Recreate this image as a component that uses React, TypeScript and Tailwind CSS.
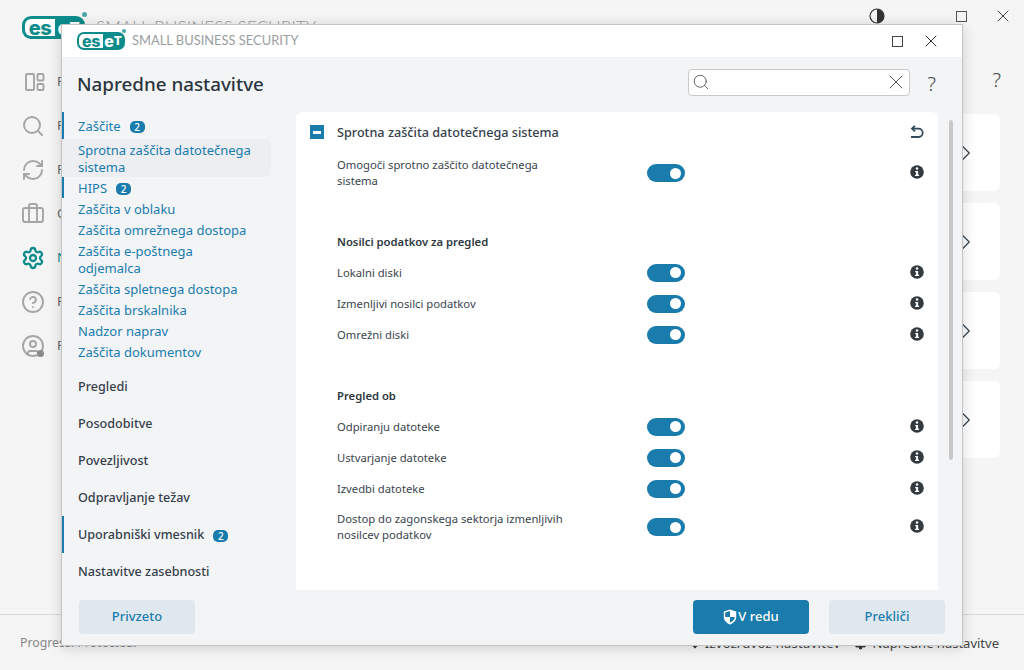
import { ArrowDown, ChevronRight, CircleHelp, CircleUser, RefreshCw, Search, Settings, Briefcase, X } from 'lucide-react';

const subItems = [
  { name: 'Sprotna zaščita datotečnega sistema', selected: true },
  { name: 'HIPS', badge: true, bar: true },
  { name: 'Zaščita v oblaku' },
  { name: 'Zaščita omrežnega dostopa' },
  { name: 'Zaščita e-poštnega odjemalca' },
  { name: 'Zaščita spletnega dostopa' },
  { name: 'Zaščita brskalnika' },
  { name: 'Nadzor naprav' },
  { name: 'Zaščita dokumentov' },
];

const topItems = [
  { name: 'Pregledi' },
  { name: 'Posodobitve' },
  { name: 'Povezljivost' },
  { name: 'Odpravljanje težav' },
  { name: 'Uporabniški vmesnik', badge: true, bar: true },
  { name: 'Nastavitve zasebnosti' },
];

const sideIcons = [
  { name: 'Pregled', icon: 'dash' },
  { name: 'Pregled računalnika', icon: Search },
  { name: 'Posodobitev', icon: RefreshCw },
  { name: 'Orodja', icon: Briefcase },
  { name: 'Nastavitve', icon: Settings, active: true },
  { name: 'Pomoč in podpora', icon: CircleHelp },
  { name: 'Pregled računa', icon: CircleUser, dot: true },
];

function Logo({ big }: { big?: boolean }) {
  return (
    <div className={big ? 'relative h-[23px] w-[63px] shrink-0' : 'relative h-[18px] w-[48px] shrink-0'}>
      <div
        className={
          big
            ? "flex h-full items-stretch overflow-hidden rounded-[9px] bg-[#0e8c8c] p-[3px] font-['Inter',sans-serif] font-extrabold"
            : "flex h-full items-stretch overflow-hidden rounded-[7px] bg-[#0e8c8c] p-[2px] font-['Inter',sans-serif] font-extrabold"
        }
      >
        <span
          className={
            big
              ? 'flex w-[30px] items-center justify-center rounded-l-[6px] bg-white text-[20px] leading-none tracking-[-0.5px] text-[#0e8c8c]'
              : 'flex w-[24px] items-center justify-center rounded-l-[5px] bg-white text-[16px] leading-none tracking-[-0.5px] text-[#0e8c8c]'
          }
        >
          es
        </span>
        <span
          className={
            big
              ? 'flex flex-1 items-center justify-center text-[20px] leading-none text-white'
              : 'flex flex-1 items-center justify-center text-[16px] leading-none text-white'
          }
        >
          e
          <span className={big ? 'text-[15px]' : 'text-[12px]'}>T</span>
        </span>
      </div>
      <div
        className={
          big
            ? 'absolute top-[-4px] right-[-2px] h-[5px] w-[5px] rounded-full bg-[#4aa9a9]'
            : 'absolute top-[-3px] right-[-1px] h-[4px] w-[4px] rounded-full bg-[#4aa9a9]'
        }
      />
    </div>
  );
}

function Badge() {
  return (
    <span className="ml-[9px] inline-flex h-[12px] w-[15px] items-center justify-center rounded-[5px] bg-[#1a7cad] text-[10px] leading-none font-medium text-white">
      2
    </span>
  );
}

function Toggle() {
  return (
    <div className="flex h-[18px] w-[38px] shrink-0 items-center justify-end rounded-full bg-[#1a7cad] pr-[4px]">
      <div className="h-[11px] w-[11px] rounded-full bg-white" />
    </div>
  );
}

function InfoIcon() {
  return (
    <svg width="14" height="14" viewBox="0 0 14 14" className="shrink-0">
      <circle cx="7" cy="7" r="6.8" fill="#333a40" />
      <circle cx="7" cy="3.6" r="1.25" fill="#fff" />
      <path d="M5.2 6h2.9v3.7h1v1.4H5v-1.4h1.1V7.3H5.2z" fill="#fff" />
    </svg>
  );
}

function Row({ label, tall }: { label: string; tall?: boolean }) {
  return (
    <div className={tall ? 'flex h-[34px] items-center pl-[41px]' : 'flex h-[31px] items-center pl-[41px]'}>
      <div className="w-[310px] shrink-0">
        <div className="max-w-[235px] text-[11.25px] leading-[16px] text-[#3a444d]">{label}</div>
      </div>
      <Toggle />
      <div className="-mt-[2px] ml-[225px] flex">
        <InfoIcon />
      </div>
    </div>
  );
}

function Heading({ label }: { label: string }) {
  return <div className="pl-[41px] text-[11.25px] leading-[16px] font-semibold text-[#2e3840]">{label}</div>;
}

export default function App() {
  return (
    <div className="relative flex h-[670px] w-[1024px] flex-col overflow-hidden bg-[#f5f5f5] font-['Noto_Sans',sans-serif]">
      {/* App behind the dialog */}
      <div className="flex h-[60px] shrink-0 items-start justify-between">
        <div className="flex items-center gap-[11px] pt-[15px] pl-[22px]">
          <Logo big />
          <span className="font-['Lato',sans-serif] text-[17.3px] font-light text-[#9a9ea1]">SMALL BUSINESS SECURITY</span>
        </div>
        <div className="flex items-center pt-[6px]">
          <div className="flex h-[20px] w-[42px] items-center justify-center">
            <svg width="16" height="16" viewBox="0 0 16 16">
              <circle cx="8" cy="8" r="7" fill="none" stroke="#333" strokeWidth="1.2" />
              <path d="M8 1a7 7 0 0 1 0 14z" fill="#333" />
            </svg>
          </div>
          <div className="flex h-[20px] w-[42px] items-end justify-center">
            <div className="h-px w-[10px] bg-[#555]" />
          </div>
          <div className="flex h-[20px] w-[42px] items-center justify-center">
            <div className="h-[11px] w-[11px] border border-[#555]" />
          </div>
          <div className="flex h-[20px] w-[42px] items-center justify-center">
            <X size={20} strokeWidth={1.2} color="#444" />
          </div>
        </div>
      </div>

      <div className="flex flex-1">
        <div className="flex w-[62px] shrink-0 flex-col gap-[24px] pt-[12px] pl-[21px]">
          {sideIcons.map((item) => {
            const Icon = item.icon;
            return (
              <div key={item.name} className="flex h-[20px] items-center gap-[12px]">
                {typeof Icon === 'string' ? (
                  <svg width="24" height="24" viewBox="0 0 24 24" fill="none" stroke="#a5a5a5" strokeWidth="1.9" className="shrink-0">
                    <rect x="5" y="4" width="8" height="16" rx="1" />
                    <rect x="16.5" y="4" width="6" height="6.5" rx="1" />
                    <rect x="16.5" y="14" width="6" height="6" rx="1" />
                  </svg>
                ) : (
                  <div className="relative shrink-0">
                    <Icon size={24} strokeWidth={item.active ? 2.3 : 1.9} color={item.active ? '#0e8c8c' : '#a5a5a5'} />
                    {item.dot && <div className="absolute right-[1px] bottom-[1px] h-[7px] w-[7px] rounded-full bg-[#8a8a8a]" />}
                  </div>
                )}
                <span className={item.active ? 'text-[13px] whitespace-nowrap text-[#0e8c8c]' : 'text-[13px] whitespace-nowrap text-[#666]'}>
                  {item.name}
                </span>
              </div>
            );
          })}
        </div>
        <div className="flex flex-1 flex-col items-end gap-[12px] pt-[54px] pr-[24px]">
          {[0, 1, 2, 3].map((i) => (
            <div key={i} className="flex h-[77px] w-[300px] items-center justify-end rounded-[6px] bg-white pr-[21px]">
              <ChevronRight size={26} strokeWidth={1.2} color="#3a4a55" />
            </div>
          ))}
        </div>
        <div className="absolute top-[68px] right-[23px] text-[20px] leading-[24px] font-light text-[#444]">?</div>
      </div>

      <div className="flex h-[56px] shrink-0 items-center justify-between border-t border-[#d8d8d8] pt-[2px] pr-[25px] pl-[20px] text-[13px]">
        <span className="text-[12.3px] text-[#888]">Progress. Protected.</span>
        <div className="flex items-center text-[#444]">
          <ArrowDown size={12} strokeWidth={2.5} color="#333" />
          <span className="ml-[4px] tracking-[0.3px]">Izvoz/uvoz nastavitev</span>
          <Settings size={13} strokeWidth={2} color="#333" fill="#333" className="mr-[6px] ml-[13px]" />
          <span>Napredne nastavitve</span>
        </div>
      </div>

      {/* Dialog */}
      <div className="absolute top-[25px] left-[62px] flex h-[620px] w-[900px] flex-col bg-[#f3f4f6] shadow-[0_0_0_1px_#c4c4c4,0_2px_14px_rgba(0,0,0,0.18)]">
        <div className="flex h-[32px] shrink-0 items-center justify-between bg-white pr-[21px] pl-[15px]">
          <div className="flex items-center gap-[7px]">
            <Logo />
            <span className="font-['Lato',sans-serif] text-[12.9px] text-[#9a9ea1]">SMALL BUSINESS SECURITY</span>
          </div>
          <div className="flex items-center gap-[18px]">
            <div className="h-[11px] w-[11px] border border-[#444]" />
            <X size={20} strokeWidth={1.2} color="#333" />
          </div>
        </div>

        <div className="flex h-[55px] shrink-0 items-center justify-between pr-[26px] pl-[15px]">
          <h1 className="text-[18.8px] font-medium text-[#2a3540]">Napredne nastavitve</h1>
          <div className="-mt-[5px] flex items-center gap-[18px]">
            <div className="flex h-[27px] w-[222px] items-center justify-between rounded-[4px] border border-[#c9c9c9] bg-white pr-[1px] pl-[3px]">
              <Search size={18} strokeWidth={1.2} color="#555" />
              <X size={24} strokeWidth={1} color="#555" />
            </div>
            <span className="mt-[3px] text-[20px] leading-none font-light text-[#444]">?</span>
          </div>
        </div>

        <div className="flex min-h-0 flex-1">
          <div className="w-[234px] shrink-0 overflow-hidden text-[13px]">
            <div className="flex h-[27px] items-center border-l-2 border-[#1a7cad] pt-[2px] pl-[14px] text-[#1a7cad]">
              Zaščite
              <Badge />
            </div>
            <div className="flex flex-col">
              {subItems.map((item) => (
                <div
                  key={item.name}
                  className={
                    item.selected
                      ? 'mr-[25px] rounded-r-[6px] bg-[#eceef1] pt-[3px] pr-[16px] pb-[1px] pl-[16px] leading-[17px] text-[#1a7cad]'
                      : item.bar
                        ? 'flex h-[21px] items-center border-l-2 border-[#1a7cad] pt-[2px] pl-[14px] leading-[17px] text-[#1a7cad]'
                        : 'pt-[3px] pr-[40px] pb-[1px] pl-[16px] leading-[17px] text-[#1a7cad]'
                  }
                >
                  {item.name}
                  {item.badge && <Badge />}
                </div>
              ))}
            </div>
            <div className="mt-[6px] flex flex-col">
              {topItems.map((item) => (
                <div
                  key={item.name}
                  className={
                    item.bar
                      ? 'flex h-[37px] items-center border-l-2 border-[#1a7cad] pt-[2px] pl-[14px] text-[12.6px] font-medium text-[#35404a]'
                      : 'flex h-[37px] items-center pt-[2px] pl-[16px] text-[12.6px] font-medium text-[#35404a]'
                  }
                >
                  {item.name}
                  {item.badge && <Badge />}
                </div>
              ))}
            </div>
          </div>

          <div className="flex min-w-0 flex-1">
            <div className="w-[642px] shrink-0 rounded-t-[6px] bg-white">
              <div className="flex h-[40px] items-center pr-[14px] pl-[14px]">
                <div className="flex h-[14px] w-[14px] items-center justify-center bg-[#1a7cad]">
                  <div className="h-[3px] w-[8px] bg-white" />
                </div>
                <span className="ml-[13px] flex-1 text-[12.65px] font-medium text-[#35404a]">Sprotna zaščita datotečnega sistema</span>
                <svg width="14" height="14" viewBox="0 0 14 14" fill="none" stroke="#2e4a5c" strokeWidth="1.8">
                  <path d="M5 .8 2 3.6l3 2.8" />
                  <path d="M2.3 3.6h6.2a4.2 4.2 0 0 1 0 8.4H1" />
                </svg>
              </div>
              <div className="pt-[4px]">
                <Row label="Omogoči sprotno zaščito datotečnega sistema" tall />
              </div>
              <div className="h-[44px]" />
              <Heading label="Nosilci podatkov za pregled" />
              <div className="h-[7px]" />
              <Row label="Lokalni diski" />
              <Row label="Izmenljivi nosilci podatkov" />
              <Row label="Omrežni diski" />
              <div className="h-[38px]" />
              <Heading label="Pregled ob" />
              <div className="h-[7px]" />
              <Row label="Odpiranju datoteke" />
              <Row label="Ustvarjanje datoteke" />
              <Row label="Izvedbi datoteke" />
              <div className="pt-[6px]">
                <Row label="Dostop do zagonskega sektorja izmenljivih nosilcev podatkov" tall />
              </div>
            </div>
            <div className="flex-1 pt-[8px] pl-[11px]">
              <div className="h-[340px] w-[4px] rounded-full bg-[#c8c8c8]" />
            </div>
          </div>
        </div>

        <div className="flex h-[55px] shrink-0 items-start justify-between pt-[10px] pr-[17px] pl-[17px] text-[13px] font-medium">
          <button className="h-[34px] w-[116px] rounded-[4px] bg-[#dfe8ee] text-[#1a7cad]">Privzeto</button>
          <div className="flex gap-[20px]">
            <button className="flex h-[34px] w-[116px] items-center justify-center gap-[1px] rounded-[4px] bg-[#1a7cad] text-white">
              <svg width="14" height="16" viewBox="0 0 14 16">
                <path d="M7 .5 13.2 2.6V8c0 3.4-2.6 6-6.2 7.5C3.4 14 .8 11.4.8 8V2.6z" fill="#fff" />
                <path d="M7 2v6H2.2V3.6zM7 8h4.8c-.2 2.6-2.2 4.5-4.8 5.8z" fill="#1a7cad" />
              </svg>
              V redu
            </button>
            <button className="h-[34px] w-[116px] rounded-[4px] bg-[#dfe8ee] text-[#1a7cad]">Prekliči</button>
          </div>
        </div>
      </div>
    </div>
  );
}
